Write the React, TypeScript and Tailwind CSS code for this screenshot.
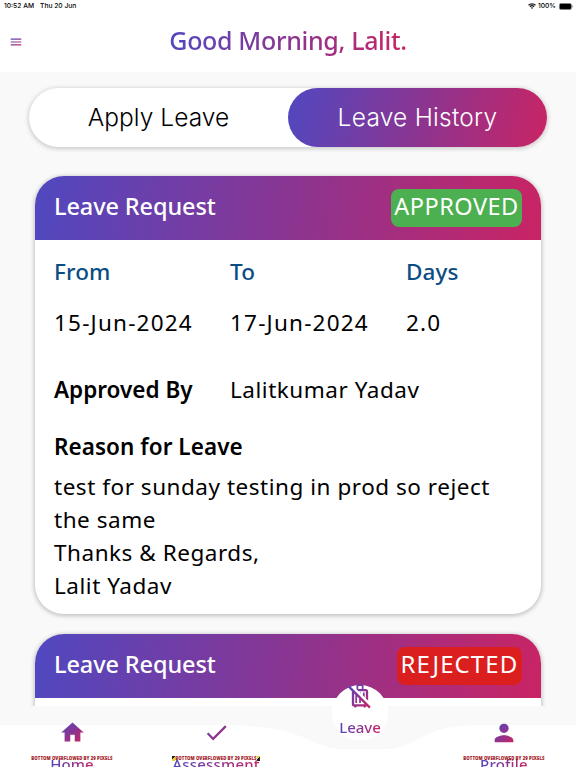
import type { ReactNode } from 'react';
import { MdCheck, MdHome, MdMenu, MdOutlineNoLuggage, MdPerson } from 'react-icons/md';

interface LeaveCardProps {
  status: string;
  statusClass: string;
  children?: ReactNode;
}

interface NavItemProps {
  label: string;
  labelClass: string;
  icon: ReactNode;
  markers?: boolean;
}

const LeaveCard = ({ status, statusClass, children }: LeaveCardProps) => (
  <section className="shrink-0 overflow-hidden rounded-[29px] bg-white shadow-[0_1px_4px_1px_rgba(0,0,0,0.22)]">
    <div className="flex h-16 items-start justify-between bg-[linear-gradient(97deg,#5048c0,#8a3592_50%,#c92464)] px-[19px] pt-[13px] text-white">
      <h2 className="text-[23.5px] leading-[34px] font-medium tracking-[-0.1px]">Leave Request</h2>
      <span className={`h-[38px] rounded-lg text-center leading-[34px] ${statusClass}`}>{status}</span>
    </div>
    {children}
  </section>
);

const NavItem = ({ label, labelClass, icon, markers }: NavItemProps) => (
  <div className="flex h-[61px] w-36 flex-col items-center overflow-hidden pt-[13px]">
    <div className="flex h-[27px] shrink-0 items-center">{icon}</div>
    <div className="relative z-10 mt-[10px] flex h-[5px] shrink-0 items-center justify-center">
      {markers && <i className="h-[5px] w-[3px] bg-[linear-gradient(135deg,#222_50%,#e8d820_50%)]" />}
      <span className="text-[4.3px] leading-[5px] font-black tracking-[0.08px] whitespace-nowrap text-[#a3202a]">
        BOTTOM OVERFLOWED BY 29 PIXELS
      </span>
      {markers && <i className="h-[5px] w-[3px] bg-[linear-gradient(135deg,#e8d820_50%,#222_50%)]" />}
    </div>
    <span
      className={`-mt-[4px] shrink-0 bg-[linear-gradient(97deg,#5048c0,#8a3592_50%,#c92464)] bg-clip-text text-[15px] leading-[15px] font-medium text-transparent ${labelClass}`}
    >
      {label}
    </span>
  </div>
);

// Shared gradient for the icon fills
const IconGradient = () => (
  <svg width="0" height="0" className="absolute">
    <defs>
      <linearGradient id="brand" x1="0" y1="0" x2="1" y2="1">
        <stop offset="0" stopColor="#5048c0" />
        <stop offset="0.5" stopColor="#8a3592" />
        <stop offset="1" stopColor="#c92464" />
      </linearGradient>
    </defs>
  </svg>
);

const BottomNav = () => (
  <nav className="relative h-[62px]">
    {/* White bar with the notch under the active tab */}
    <svg className="absolute inset-x-0 top-0" width="576" height="62" viewBox="0 0 576 62">
      <path
        d="M0 19H225C260 19 284 24 300 30C317 37 326 43 344 43H383C403 43 410 37 426 29C443 21 459 19 485 19H576V62H0Z"
        fill="#fff"
      />
    </svg>
    <div className="relative flex">
      <NavItem label="Home" labelClass="tracking-[0.1px]" icon={<MdHome size={27} fill="url(#brand)" />} />
      <NavItem label="Assessment" labelClass="tracking-[0.2px]" markers icon={<MdCheck size={27} fill="url(#brand)" />} />
      <div className="relative -mt-[21px] flex w-36 flex-col items-center">
        <div className="flex h-14 w-14 justify-center rounded-full bg-white">
          <MdOutlineNoLuggage size={28} fill="url(#brand)" className="-mt-[3px] shrink-0" />
        </div>
        <span className="-mt-[25px] bg-[linear-gradient(97deg,#5048c0,#8a3592_50%,#c92464)] bg-clip-text text-[15px] leading-[22px] font-medium text-transparent">
          Leave
        </span>
      </div>
      <NavItem label="Profile" labelClass="tracking-[0.2px]" icon={<MdPerson size={28} fill="url(#brand)" />} />
    </div>
  </nav>
);

const App = () => {
  return (
    <div className="flex h-[768px] w-[576px] flex-col overflow-hidden bg-[#f9f9f9] font-['Noto_Sans',sans-serif] text-black">
      <IconGradient />
      <header className="h-[72px] bg-white">
        <div className="flex h-3 items-center justify-between pr-[3px] pl-1 font-[Inter,sans-serif] text-[6.7px] leading-3 font-medium">
          <div className="flex gap-[6px]">
            <span>10:52 AM</span>
            <span>Thu 20 Jun</span>
          </div>
          <div className="flex items-center gap-[2px]">
            <svg width="8" height="6" viewBox="0 0 16 12" fill="none" stroke="#111" strokeWidth="2.4">
              <path d="M1 4.5a10 10 0 0 1 14 0M3.8 7.5a6 6 0 0 1 8.4 0" />
              <path d="M5.8 9.3L8 12l2.2-2.7a3.5 3.5 0 0 0-4.4 0Z" fill="#111" stroke="none" />
            </svg>
            <span>100%</span>
            <svg width="15" height="7" viewBox="0 0 15 7">
              <rect x="1.4" y="0.4" width="12" height="6" rx="1.5" fill="#000" stroke="#888" strokeWidth="0.5" />
              <rect x="14" y="2.4" width="0.8" height="2" fill="#888" />
            </svg>
          </div>
        </div>
        <div className="relative flex h-14 items-center justify-center">
          <MdMenu size={14} fill="url(#brand)" className="absolute top-[23px] left-[9px]" />
          <h1 className="-mt-px bg-[linear-gradient(97deg,#5048c0,#8a3592_50%,#c92464)] bg-clip-text text-[25px] leading-9 font-medium tracking-[-0.33px] text-transparent">
            Good Morning, Lalit.
          </h1>
        </div>
      </header>

      <main className="flex h-[634px] shrink-0 flex-col overflow-hidden pt-4">
        <div className="mx-[29px] flex h-[59px] shrink-0 rounded-full bg-white font-[Inter,sans-serif] text-[24.5px] shadow-[0_1px_4px_1px_rgba(0,0,0,0.18)]">
          <button className="w-[259px] font-[350] tracking-[0.05px]">Apply Leave</button>
          <button className="w-[259px] rounded-full bg-[linear-gradient(103deg,#5048c0,#8a3592_50%,#c92464)] font-light tracking-[0.25px] text-white">
            Leave History
          </button>
        </div>

        <div className="mt-[29px] flex flex-col gap-[20px] px-[35px]">
          <LeaveCard status="APPROVED" statusClass="w-[131px] bg-[#4caf50] text-[23.5px] tracking-[0.5px]">
            <div className="h-[374px] px-[19px] pt-[15px] text-[22.5px] leading-[33px] tracking-[0.53px]">
              <div className="grid grid-cols-[176px_176px_1fr] font-medium tracking-[0.1px] text-[#0a4d84]">
                <span>From</span>
                <span>To</span>
                <span>Days</span>
              </div>
              <div className="mt-[18px] grid grid-cols-[176px_176px_1fr] tracking-[1.2px]">
                <span>15-Jun-2024</span>
                <span>17-Jun-2024</span>
                <span>2.0</span>
              </div>
              <div className="mt-[34px] grid grid-cols-[176px_1fr]">
                <span className="font-semibold tracking-normal">Approved By</span>
                <span>Lalitkumar Yadav</span>
              </div>
              <h3 className="mt-[24px] font-semibold tracking-[0.05px]">Reason for Leave</h3>
              <p className="mt-[7px]">
                test for sunday testing in prod so reject
                <br />
                the same
                <br />
                Thanks &amp; Regards,
                <br />
                Lalit Yadav
              </p>
            </div>
          </LeaveCard>
          <LeaveCard status="REJECTED" statusClass="w-[125px] bg-[#db1f1f] text-[24px] tracking-[1.1px]">
            <div className="h-[374px]" />
          </LeaveCard>
        </div>
      </main>

      <BottomNav />
    </div>
  );
};

export default App;
